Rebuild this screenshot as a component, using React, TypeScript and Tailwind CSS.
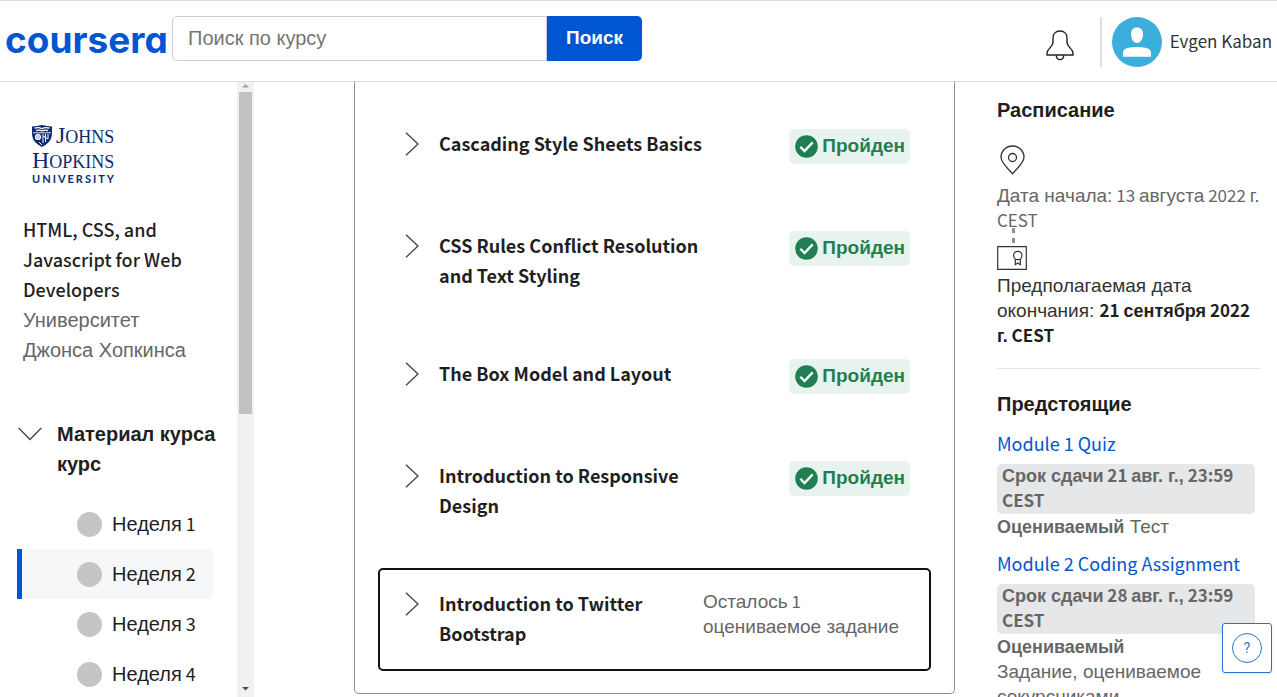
import React from "react";

const LATIN_SIZE = {
  lg: "text-[18px]",
  md: "text-[17px]",
};

/* Cyrillic uses the sans face; Latin letters and digits use the humanist face. */
function Mixed({ children, size = "lg" }: { children: string; size?: keyof typeof LATIN_SIZE }) {
  const runs = children.match(/[А-Яа-яЁё]+(?:[ :.,]+[А-Яа-яЁё]+)*[:.,]*|[^А-Яа-яЁё]+/g) ?? [];
  return (
    <>
      {runs.map((run, i) =>
        /[A-Za-z0-9]/.test(run) ? (
          <span key={i} className={`font-['Noto_Sans_CJK_SC',sans-serif] leading-none ${LATIN_SIZE[size]}`}>
            {run}
          </span>
        ) : (
          <React.Fragment key={i}>{run}</React.Fragment>
        ),
      )}
    </>
  );
}

function ChevronRight() {
  return (
    <svg className="mt-[3px] h-6 w-3.5 shrink-0" viewBox="0 0 14 24" fill="none" stroke="#444" strokeWidth="1.3" aria-hidden="true">
      <path d="M1 .7 13 12 1 23.3" />
    </svg>
  );
}

function PassedBadge() {
  return (
    <span className="flex h-[35px] items-center gap-1 rounded-[5px] bg-[#e8f2ee] pr-[5px] pl-1.5 text-[19px] font-bold text-[#1f7f50]">
      <svg className="size-[23px]" viewBox="0 0 23 23" aria-hidden="true">
        <circle cx="11.5" cy="11.5" r="11.3" fill="#1f7f50" />
        <path d="m5.3 11.8 4.2 4.2 8.2-8.6" fill="none" stroke="#fff" strokeWidth="2.3" />
      </svg>
      Пройден
    </span>
  );
}

function JohnsHopkinsLogo() {
  return (
    <div className="ml-[9px] w-[100px] text-[#0b2c74]" role="img" aria-label="Johns Hopkins University">
      <div className="flex h-6 items-center gap-1 font-['Liberation_Serif',serif] leading-6">
        <svg className="h-[22px] w-5" viewBox="0 0 20 22" aria-hidden="true">
          <path d="M0 1.500C4 1.500 6 .6 10 0c4 .6 6 1.500 10 1.500V8c0 7-4 11-10 14C4 19 0 15 0 8Z" fill="#0b2c74" />
          <path d="M2.500 3.200c3-1 5-1 7.500.6 2.500-1.600 4.500-1.600 7.500-.6M4 5.600c2-.7 4-.5 6 .4 2-.9 4-1.100 6-.4" fill="none" stroke="#fff" strokeWidth="1.300" />
          <path d="M1 7.800h18" stroke="#fff" strokeWidth=".9" />
          <circle cx="6" cy="12" r="2.400" fill="none" stroke="#fff" strokeWidth="1.400" />
          <path d="M3.500 12h5M6 9.500v5M11 9v9M13.500 9v8M16 9v5M11 11l5 3M7 17l3 3" fill="none" stroke="#fff" strokeWidth="1" />
        </svg>
        <span className="text-[18px]">
          <span className="text-[24px] leading-none">J</span>OHNS
        </span>
      </div>
      <div className="h-6 font-['Liberation_Serif',serif] text-[18px] leading-6">
        <span className="text-[24px] leading-none">H</span>OPKINS
      </div>
      <div className="font-['Lato',sans-serif] text-[11px] leading-[14px] font-bold tracking-[2px]">UNIVERSITY</div>
    </div>
  );
}

function Header() {
  return (
    <header className="flex h-[82px] shrink-0 items-center border-y border-[#dcdde0] pr-[5px] pl-[5px]">
      <a href="#" className="w-[167px] pb-1 font-['Inter',sans-serif] text-[37px] leading-none font-bold text-[#0056d2] [font-feature-settings:'cv11']">
        coursera
      </a>
      <form className="mb-1.5 flex h-[45px]" onSubmit={(e) => e.preventDefault()}>
        <input
          type="search"
          aria-label="Поиск по курсу"
          placeholder="Поиск по курсу"
          className="w-[375px] rounded-l-[5px] border border-[#c7cbd9] px-[15px] text-[20px] outline-none placeholder:text-[#757575]"
        />
        <button className="w-[95px] rounded-r-[5px] bg-[#0056d2] text-[19px] font-bold text-white">Поиск</button>
      </form>
      <div className="mt-0.5 ml-auto flex items-center">
        <button aria-label="Уведомления" className="mt-1.5 mr-[26px]">
          <svg className="h-[31px] w-7" viewBox="0 0 28 31" fill="none" stroke="#222" strokeWidth="1.4" aria-hidden="true">
            <path d="M14 1C9.700 1 7 4 7 8v4c0 5-6 7-6 11v2h26v-2c0-4-6-6-6-11V8c0-4-2.700-7-7-7Z" />
            <path d="M10.300 25.200c0 2.600 1.400 4.400 3.700 4.400s3.700-1.800 3.700-4.400" />
          </svg>
        </button>
        <span className="h-[50px] w-0.5 bg-[#dedede]" />
        <svg className="ml-2.5 size-[50px]" viewBox="0 0 50 50" aria-hidden="true">
          <circle cx="25" cy="25" r="25" fill="#3caedb" />
          <path d="M25 10.500c4 0 6 2.300 6 6.500 0 5-2.700 9-6 9s-6-4-6-9c0-4.200 2-6.500 6-6.500ZM11 39.700v-3.500c0-3 1.500-4.500 4.500-5.200 6-1.400 13-1.400 19 0 3 .7 4.500 2.200 4.500 5.200v3.500Z" fill="#fff" />
        </svg>
        <a href="#" className="ml-2 text-[18px] text-[#333]">
          <Mixed size="md">Evgen Kaban</Mixed>
        </a>
      </div>
    </header>
  );
}

const weeks = ["Неделя 1", "Неделя 2", "Неделя 3", "Неделя 4"];

function Sidebar() {
  return (
    <aside className="flex w-[254px] shrink-0">
      <div className="flex-1 overflow-hidden pt-[42px] pl-[17px]">
        <div className="pl-1.5">
          <JohnsHopkinsLogo />
          <h2 className="mt-[29px] text-[20px] leading-[30px] font-medium text-[#1f1f1f]">
            <Mixed>HTML, CSS, and Javascript for Web Developers</Mixed>
          </h2>
          <p className="w-[170px] text-[20px] leading-[30px] text-[#666]">Университет Джонса Хопкинса</p>
        </div>
        <button className="mt-[54px] flex text-left text-[20px] leading-[30px] font-bold text-[#1f1f1f]">
          <svg className="mt-2 mr-[15px] ml-px h-3.5 w-6" viewBox="0 0 24 14" fill="none" stroke="#444" strokeWidth="1.3" aria-hidden="true">
            <path d="m.7 1 11.300 11.500L23.300 1" />
          </svg>
          <span className="w-[160px]">Материал курса курс</span>
        </button>
        <nav className="mt-5 mr-6">
          {weeks.map((week, i) => (
            <a
              key={week}
              href="#"
              className={`flex h-[50px] items-center gap-2.5 rounded-r-[5px] border-l-[5px] pl-[55px] text-[20px] leading-[30px] text-[#1f1f1f] ${
                i === 1 ? "border-[#0056d2] bg-[#f5f7f8]" : "border-transparent"
              }`}
            >
              <span className="size-[25px] rounded-full bg-[#c4c5c7]" />
              <span>
                <Mixed>{week}</Mixed>
              </span>
            </a>
          ))}
        </nav>
      </div>
      <div className="flex w-[17px] flex-col items-center bg-[#f1f1f1]" aria-hidden="true">
        <svg className="h-2.5 w-[7px] shrink-0" viewBox="0 0 7 10">
          <path d="M3.500 2 7 5.500H0Z" fill="#a3a3a3" />
        </svg>
        <div className="h-[322px] w-[13px] bg-[#c1c1c1]" />
        <svg className="mt-auto h-3.5 w-[7px]" viewBox="0 0 7 14">
          <path d="M0 4h7L3.500 7.500Z" fill="#505050" />
        </svg>
      </div>
    </aside>
  );
}

const lessons = [
  { title: "Cascading Style Sheets Basics", passed: true },
  { title: "CSS Rules Conflict Resolution and Text Styling", passed: true },
  { title: "The Box Model and Layout", passed: true },
  { title: "Introduction to Responsive Design", passed: true },
  { title: "Introduction to Twitter Bootstrap", passed: false },
];

function Lessons() {
  return (
    <main className="mr-[42px] ml-[100px] flex-1 self-start rounded-b-[5px] border border-t-0 border-[#8e8e96] px-[23px] pt-[26px] pb-[22px]">
      <ul className="flex flex-col gap-[25px]">
        {lessons.map(({ title, passed }) => (
          <li key={title}>
            <button
              className={`flex w-full items-start justify-between rounded-[5px] border-2 py-[19px] pr-[19px] pl-[25px] text-left ${
                passed ? "border-transparent" : "border-[#111]"
              }`}
            >
              <span className="flex gap-5">
                <ChevronRight />
                <span className="w-[264px] pb-px text-[20px] leading-[30px] font-bold text-[#1f1f1f]">
                  <Mixed>{title}</Mixed>
                </span>
              </span>
              {passed ? (
                <PassedBadge />
              ) : (
                <span className="w-[207px] text-[19px] leading-[25px] text-[#666]">
                  <Mixed size="md">Осталось 1 оцениваемое задание</Mixed>
                </span>
              )}
            </button>
          </li>
        ))}
      </ul>
    </main>
  );
}

const upcoming = [
  { title: "Module 1 Quiz", due: "Срок сдачи 21 авг. г., 23:59 CEST", kind: "Тест" },
  { title: "Module 2 Coding Assignment", due: "Срок сдачи 28 авг. г., 23:59 CEST", kind: "Задание, оцениваемое сокурсниками" },
];

function Schedule() {
  return (
    <aside className="mr-[17px] w-[263px] shrink-0 text-[19px] leading-[25px] text-[#666]">
      <h2 className="mt-[13px] text-[20px] leading-[30px] font-bold text-[#1f1f1f]">Расписание</h2>
      <svg className="mt-5 ml-[3px] h-[30px] w-[25px]" viewBox="0 0 25 30" fill="none" stroke="#333" strokeWidth="1.3" aria-hidden="true">
        <path d="M12.500 28.700C8 24 1 17.500 1 12.300a11.500 11.300 0 0 1 23 0c0 5.200-7 11.700-11.500 16.400Z" />
        <circle cx="12.500" cy="12.500" r="4" />
      </svg>
      <p className="mt-2">
        <Mixed size="md">Дата начала: 13 августа 2022 г. CEST</Mixed>
      </p>
      <svg className="-mt-1.5 h-[44px] w-[30px]" viewBox="0 0 30 44" fill="none" stroke="#333" strokeWidth="1.200" aria-hidden="true">
        <path d="M16.500 1v5M16.500 11v5" stroke="#8f8f96" strokeWidth="3" />
        <path d="M.7 19.700h28.600v22.600H.7Z" />
        <circle cx="20.800" cy="28.500" r="4.200" />
        <path d="M18.300 32v5.700l2.500-1.700 2.500 1.700V32" />
      </svg>
      <p className="mt-0.5 w-[258px] text-[#333]">
        <Mixed size="md">Предполагаемая дата окончания: </Mixed>
        <strong className="text-[18px] leading-none text-[#1f1f1f]">
          <Mixed size="md">21 сентября 2022 г. CEST</Mixed>
        </strong>
      </p>
      <hr className="mt-5 border-[#e5e5e5]" />
      <h2 className="mt-5 text-[20px] leading-[30px] font-bold text-[#1f1f1f]">Предстоящие</h2>
      <ul className="mt-[10px] flex flex-col gap-[10px]">
        {upcoming.map(({ title, due, kind }) => (
          <li key={title}>
            <a href="#" className="block text-[20px] leading-[30px] text-[#0056d2]">
              <Mixed>{title}</Mixed>
            </a>
            <p className="mt-[5px] mr-[5px] rounded-[5px] bg-[#e5e7e8] px-[5px] text-[18px] font-bold">
              <Mixed size="md">{due}</Mixed>
            </p>
            <p className="w-[210px]">
              <strong className="text-[18px] leading-none">Оцениваемый</strong> {kind}
            </p>
          </li>
        ))}
      </ul>
    </aside>
  );
}

export default function App() {
  return (
    <div className="flex h-screen flex-col overflow-hidden bg-white font-['Liberation_Sans',Arial,sans-serif]">
      <Header />
      <div className="flex min-h-0 flex-1 overflow-hidden">
        <Sidebar />
        <Lessons />
        <Schedule />
      </div>
      <button aria-label="Помощь" className="fixed right-[5px] bottom-6 flex size-[50px] items-center justify-center rounded-[3px] border border-[#2a73cc] bg-white shadow-sm">
        <span className="flex size-[30px] items-center justify-center rounded-full border border-[#2a73cc] font-['Roboto',sans-serif] text-[14px] text-[#2a73cc]">?</span>
      </button>
    </div>
  );
}
